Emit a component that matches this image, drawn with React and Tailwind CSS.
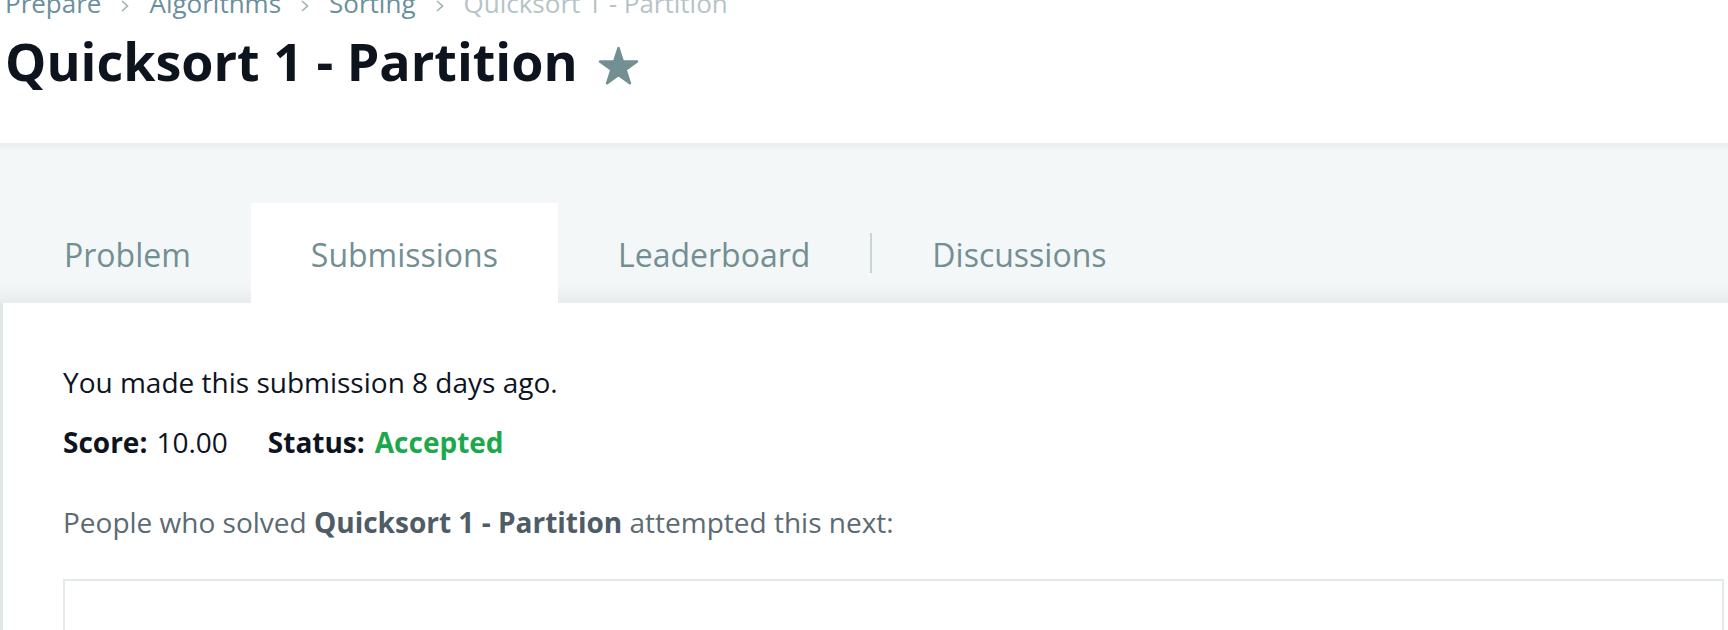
import React from "react";

function Star() {
    return (
        <svg width="43" height="40" viewBox="0 0 42 39" className="shrink-0">
            <polygon
                points="21,2 25.27,15.13 39.07,15.13 27.9,23.24 32.17,36.37 21,28.26 9.83,36.37 14.1,23.24 2.93,15.13 16.73,15.13"
                fill="#738f93"
                stroke="#738f93"
                strokeWidth="2.5"
                strokeLinejoin="round"
            />
        </svg>
    );
}

function Chevron() {
    return (
        <svg width="10" height="12" viewBox="0 0 10 12" className="inline-block ml-[19px] mr-[19px]">
            <path d="M2 1 L7.5 6 L2 11" fill="none" stroke="#9fb1b5" strokeWidth="1.6" />
        </svg>
    );
}

const tabs = ["Problem", "Submissions", "Leaderboard"];

export default function App() {
    return (
        <div className="min-h-screen bg-[#f3f7f7] font-['Open_Sans',sans-serif] overflow-hidden">
            {/* header */}
            <div className="bg-white h-[143px] pl-[5px] overflow-hidden">
                <div className="-mt-[16px] text-[26px] leading-[38px] text-[#6b8f9c] whitespace-nowrap">
                    <span>Prepare</span>
                    <Chevron />
                    <span>Algorithms</span>
                    <Chevron />
                    <span>Sorting</span>
                    <Chevron />
                    <span className="text-[#b5c4c7]">Quicksort 1 - Partition</span>
                </div>
                <div className="mt-[7px] flex items-center">
                    <h1 className="text-[52px] leading-[64px] font-bold text-[#0e141e] whitespace-nowrap">
                        Quicksort 1 - Partition
                    </h1>
                    <div className="ml-[19px] mt-[9px]">
                        <Star />
                    </div>
                </div>
            </div>

            {/* tab band */}
            <div className="relative h-[160px] flex items-end bg-[linear-gradient(to_bottom,#e9eded_0px,#f3f7f7_8px,#f3f7f7_140px,#e8ecec_160px)]">
                <div className="flex items-center pl-[4px]">
                    {tabs.map((t) => (
                        <div
                            key={t}
                            className={
                                t === "Submissions"
                                    ? "h-[100px] px-[60px] bg-white text-[32px] leading-[104px] text-[#738f93]"
                                    : "h-[100px] px-[60px] text-[32px] leading-[104px] text-[#738f93]"
                            }
                        >
                            {t}
                        </div>
                    ))}
                    <div className="w-[2px] h-[40px] bg-[#c9d4d6]" />
                    <div className="h-[100px] px-[60px] text-[32px] leading-[104px] text-[#738f93]">
                        Discussions
                    </div>
                </div>
            </div>

            {/* card */}
            <div className="bg-white border-l-[3px] border-[#e1e6e7] pl-[60px] pr-[4px] pt-[59px] pb-[60px]">
                <p className="text-[28px] leading-[40px] text-[#0e141e]">
                    You made this submission 8 days ago.
                </p>
                <p className="mt-[20px] text-[28px] leading-[40px] text-[#0e141e] flex">
                    <span className="font-bold">Score:</span>
                    <span className="ml-[9px]">10.00</span>
                    <span className="ml-[40px] font-bold">Status:</span>
                    <span className="ml-[10px] font-bold text-[#1ba94c]">Accepted</span>
                </p>
                <p className="mt-[40px] text-[28px] leading-[40px] text-[#5b6a73]">
                    People who solved{" "}
                    <span className="font-bold text-[#4d5c65]">Quicksort 1 - Partition</span>{" "}
                    attempted this next:
                </p>
                <div className="mt-[37px] h-[200px] border-2 border-[#e4eaec] bg-white" />
            </div>
        </div>
    );
}
